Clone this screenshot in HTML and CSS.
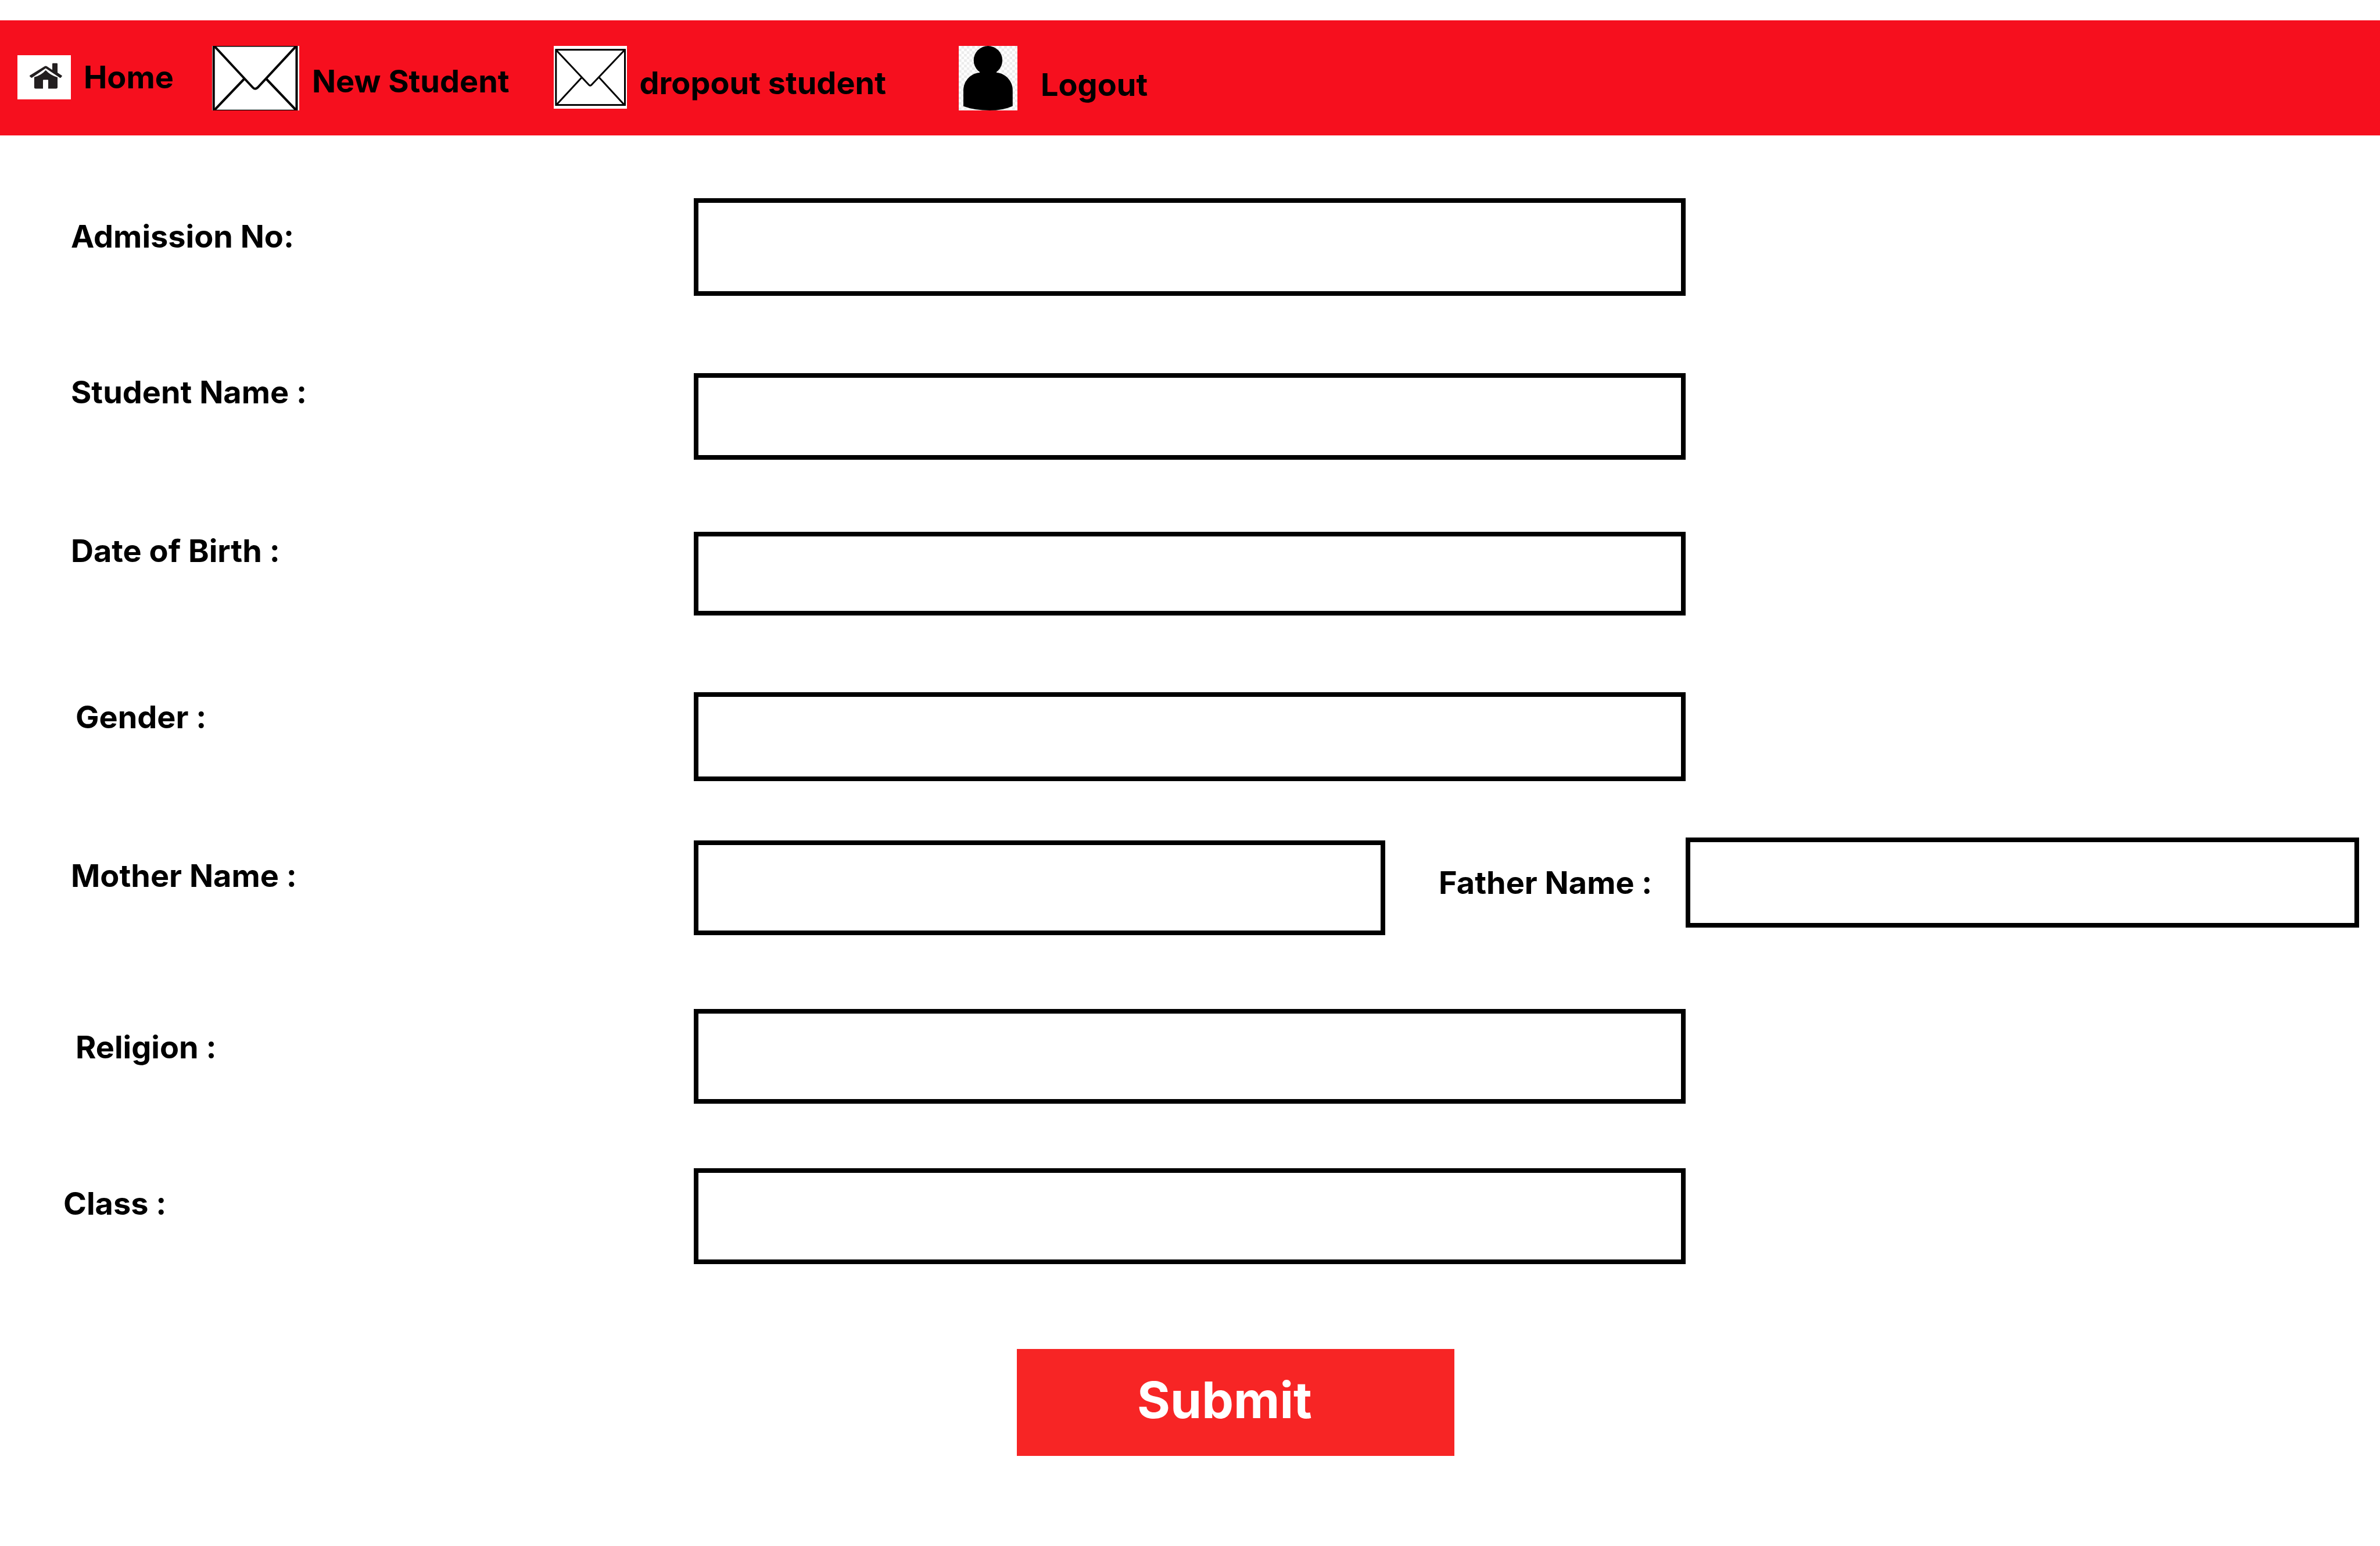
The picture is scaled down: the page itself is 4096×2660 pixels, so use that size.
FILE: index.html
```html
<!DOCTYPE html>
<html lang="en">
<head>
<meta charset="utf-8">
<meta name="viewport" content="width=device-width, initial-scale=1">
<title>New Student</title>
<link rel="stylesheet" href="styles.css">
</head>
<body>
<nav class="nav" aria-label="Main">
  <a class="nav-link nav-link--home" href="#home">
    <svg class="nav-icon" width="92" height="76" viewBox="0 0 92 76" aria-hidden="true">
      <rect width="92" height="76" fill="#fff"/>
      <g fill="#231f20">
        <path d="M60 22V15q0-1.300 1.300-1.300h6.400q1.300 0 1.300 1.300V30l7.500 5q.8.800 0 1.600l-2 2.200q-.8.600-1.600 0L48.700 22.600 25.300 38.600q-1 .6-1.700 0l-2.400-2.200q-.6-.8.200-1.600L46.500 19.200q2.200-1.500 4.400 0L60 25.300Z"/>
        <path d="M48.700 25.800Q57 35 69 37.900V55.500q0 2.100-2.400 2.100H53V43.300q0-1-1-1H45q-1 0-1 1V57.600H31.200q-2.300 0-2.300-2.100V37.700Q40.500 35 48.700 25.800Z"/>
      </g>
    </svg>
    <span>Home</span>
  </a>
  <a class="nav-link nav-link--new" href="#new-student">
    <svg class="nav-icon" width="150" height="111" viewBox="0 0 150 111" aria-hidden="true">
      <rect width="150" height="111" fill="#fff"/>
      <g fill="none" stroke="#000" stroke-width="4">
        <path d="M2.700 0V111M145.500 0V111"/>
        <path d="M2 0.700H147M2 110.500H147" stroke-width="1.400"/>
        <path d="M3.500 0L70 71.500Q74 76 78.500 71.500L145 0"/>
        <path d="M3.500 111L56 56M145 111L92.500 56"/>
      </g>
    </svg>
    <span>New Student</span>
  </a>
  <a class="nav-link nav-link--dropout" href="#dropout-student">
    <svg class="nav-icon" width="126" height="108" viewBox="0 0 126 108" aria-hidden="true">
      <rect width="126" height="108" fill="#fff"/>
      <g fill="none" stroke="#000" stroke-width="3">
        <rect x="3.800" y="6.600" width="118.700" height="95"/>
        <path d="M4 7L60.500 67Q62.700 69.500 65 67L122 7M4 102L48 54.500M122 102L78.300 54.500"/>
      </g>
    </svg>
    <span>dropout student</span>
  </a>
  <a class="nav-link nav-link--logout" href="#logout">
    <svg class="nav-icon" width="101" height="111" viewBox="0 0 101 111" aria-hidden="true">
      <defs>
        <pattern id="checks" width="9.200" height="9.200" patternUnits="userSpaceOnUse">
          <rect width="9.200" height="9.200" fill="#fff"/>
          <path d="M4.600 0h4.600v4.600H4.600zM0 4.600h4.600v4.600H0z" fill="#ececec"/>
        </pattern>
      </defs>
      <rect width="101" height="111" fill="url(#checks)"/>
      <circle cx="50.400" cy="24.700" r="24.700"/>
      <path d="M36 46H65C81 47 92.800 61 92.800 76V103.400Q76 111 53 111Q27 111 8 103.800V76C8 61 20 47 36 46Z"/>
      <path d="M36 43H65V48H36Z"/>
    </svg>
    <span>Logout</span>
  </a>
</nav>

<form class="form" action="#">
  <div class="row row--admission">
    <label class="label label--low" for="admission">Admission No:</label>
    <input class="field" id="admission" type="text">
  </div>
  <div class="row row--student">
    <label class="label" for="student">Student Name :</label>
    <input class="field" id="student" type="text">
  </div>
  <div class="row row--birth">
    <label class="label" for="birth">Date of Birth :</label>
    <input class="field" id="birth" type="text">
  </div>
  <div class="row row--gender">
    <label class="label label--inset" for="gender">Gender :</label>
    <input class="field" id="gender" type="text">
  </div>
  <div class="row row--parents">
    <label class="label label--mid" for="mother">Mother Name :</label>
    <input class="field" id="mother" type="text">
    <div class="father">
      <label class="father-label" for="father">Father Name :</label>
      <input class="field father-field" id="father" type="text">
    </div>
  </div>
  <div class="row row--religion">
    <label class="label label--inset label--low" for="religion">Religion :</label>
    <input class="field" id="religion" type="text">
  </div>
  <div class="row row--class">
    <label class="label label--outset label--mid" for="class">Class :</label>
    <input class="field" id="class" type="text">
  </div>
  <div class="actions">
    <button class="submit" type="submit">Submit</button>
  </div>
</form>
</body>
</html>
```
FILE: styles.css
```css
* {
  box-sizing: border-box;
}

body {
  margin: 0;
  padding-top: 35px;
  background: #fff;
  color: #000;
  font-family: Inter, "Liberation Sans", sans-serif;
  font-size: 54px;
  font-weight: 700;
  line-height: 66px;
}

/* Top navigation */
.nav {
  display: flex;
  align-items: flex-start;
  padding: 44px 30px 43px;
  background: #f60f1e;
}

.nav-link {
  display: flex;
  align-items: flex-end;
  gap: 22px;
  color: inherit;
  line-height: 88px;
  text-decoration: none;
  white-space: nowrap;
}

.nav-icon {
  display: block;
  flex: none;
}

.nav-link--home {
  align-items: center;
  line-height: 108px;
}

.nav-link--new {
  margin-left: 66px;
  line-height: 100px;
}

.nav-link--dropout {
  margin-left: 76px;
}

.nav-link--logout {
  gap: 40px;
  margin-left: 125px;
}

/* Admission form */
.form {
  padding-top: 108px;
}

.row {
  display: grid;
  grid-template-columns: 1194fr 1707fr 1195fr;
  align-items: start;
}

.label {
  padding-left: 122px;
}

.label--inset {
  padding-left: 130px;
}

.label--outset {
  padding-left: 109px;
}

.label--mid {
  padding-top: 28px;
}

.label--low {
  padding-top: 33px;
}

.field {
  width: 100%;
  min-width: 0;
  height: 163px;
  padding: 0 32px;
  border: 8px solid #000;
  border-radius: 0;
  background: #fff;
  color: inherit;
  font: inherit;
}

.row--admission .field {
  height: 168px;
}

.row--student {
  margin-top: 133px;
}

.row--student .field {
  height: 149px;
}

.row--birth {
  margin-top: 124px;
}

.row--birth .field {
  height: 144px;
}

.row--gender {
  margin-top: 132px;
}

.row--gender .label {
  padding-top: 10px;
}

.row--gender .field {
  height: 153px;
}

.row--parents {
  grid-template-columns: 1194fr 1190fr 1712fr;
  margin-top: 102px;
}

.father {
  display: grid;
  grid-template-columns: 517fr 1159fr 36fr;
  align-items: center;
  margin-top: -5px;
}

.father-label {
  padding-left: 92px;
  white-space: nowrap;
}

.row--parents .father-field {
  height: 155px;
}

.row--religion {
  margin-top: 127px;
}

.row--class {
  margin-top: 111px;
}

.row--class .field {
  height: 165px;
}

.actions {
  display: grid;
  grid-template-columns: 1750fr 753fr 1593fr;
  padding: 146px 0 120px;
}

.submit {
  grid-column: 2;
  height: 184px;
  padding: 0 38px 8px 0;
  border: 0;
  background: #f72525;
  color: #fff;
  font: inherit;
  font-size: 87px;
  line-height: 106px;
  cursor: pointer;
}
```
